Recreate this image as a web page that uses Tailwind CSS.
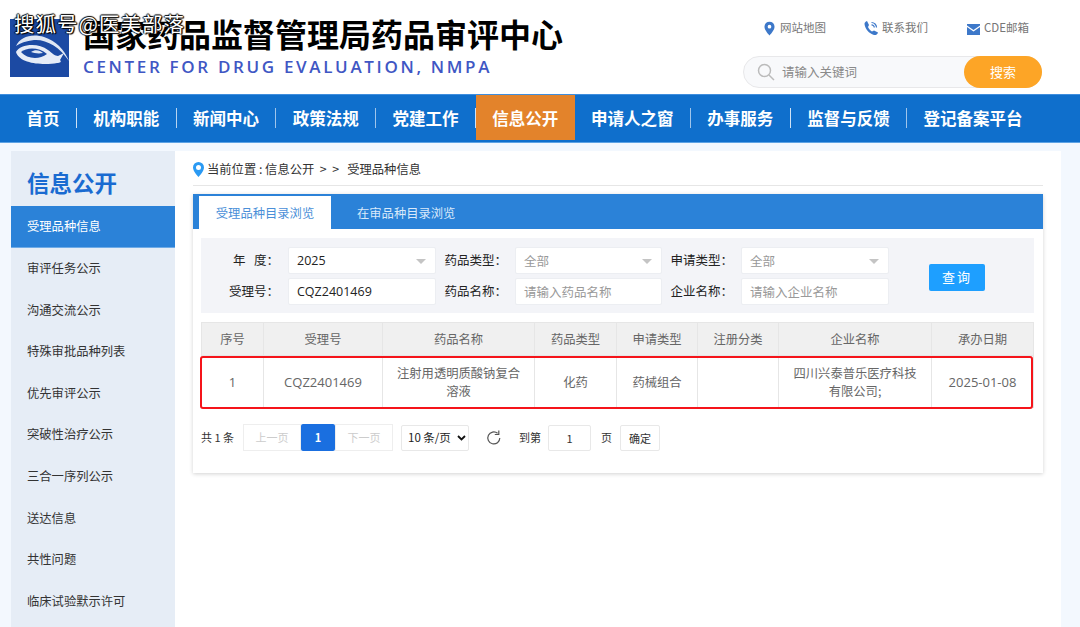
<!DOCTYPE html>
<html lang="zh"><head><meta charset="utf-8"><script src="https://cdn.jsdelivr.net/npm/@tailwindcss/browser@4"></script></head>
<body class="w-[1080px] h-[627px] overflow-hidden bg-[#f3f8fe] text-[12.5px] font-['Noto_Sans_CJK_SC','Noto_Sans',sans-serif] relative">
<div class="absolute left-[14px] top-[9px] text-[20.5px] leading-[28px] text-white tracking-[1px] whitespace-nowrap [text-shadow:1px_1px_1px_#000,-1px_0_1px_#000,0_-1px_1px_#000,1px_0_1px_#000] z-10">搜狐号@医美部落</div>
<header class="h-[94px] bg-white flex">
  <svg class="w-[59px] h-[58px] ml-[10px] mt-[19px] shrink-0" viewBox="0 0 59 58"><rect width="59" height="58" fill="#1c4aa3"/><path d="M6 27C10 18 22 14 34 18C46 22 54 30 59 42C50 28 36 20 24 21C16 22 10 24 6 27Z" fill="#dfe7f4"/><path d="M6 33C10 25 28 23 38 31C42 34 45 37 48 37L54 34L50 41C52 43 50 44 47 44C36 46 10 46 6 33Z" fill="#e6ecf7"/><path d="M11 33C17 28 29 28 37 35C29 41 17 40 11 33Z" fill="#1c4aa3"/><path d="M21 33C25 30 30 31 33 34C28 35 24 34 21 33Z" fill="#dfe7f4"/></svg>
  <div class="ml-[14px] pt-[13px] flex-1">
    <div class="text-[32px] leading-[40px] font-bold text-black whitespace-nowrap">国家药品监督管理局药品审评中心</div>
    <div class="text-[17px] leading-[20px] mt-[4px] font-semibold tracking-[2.66px] text-[#3f57c4] font-['Open_Sans',sans-serif] whitespace-nowrap">CENTER FOR DRUG EVALUATION, NMPA</div>
  </div>
  <div class="w-[299px] mr-[38px] shrink-0">
    <div class="flex h-[56px] items-center text-[11.5px] text-[#777]">
      <svg class="w-[11px] h-[15px] ml-[21px]" viewBox="0 0 12 15"><path d="M6 0a5.500 5.500 0 0 0-5.500 5.500C.5 9.500 6 15 6 15s5.500-5.500 5.500-9.500A5.500 5.500 0 0 0 6 0zm0 7.500a2 2 0 1 1 0-4 2 2 0 0 1 0 4z" fill="#3d78c9"/></svg>
      <span class="ml-[5px] w-[84px]">网站地图</span>
      <svg class="w-[14px] h-[14px]" viewBox="0 0 14 14"><path d="M3 0 L5 4 L4 6 C5 8 6.500 9.500 8 10.500 L10 9.500 L14 11.500 C13.500 13.500 11.500 14.500 10 14 C5 12.500 1 8 0.500 3 C0.500 1.500 1.500 .5 3 0Z" fill="#3d78c9"/><path d="M7.500 1.500a5 5 0 0 1 5 5M7.500 3.800a2.800 2.800 0 0 1 2.800 2.800" stroke="#3d78c9" stroke-width="1.200" fill="none"/></svg>
      <span class="ml-[4px] w-[85px]">联系我们</span>
      <svg class="w-[13px] h-[11px] mt-[2px]" viewBox="0 0 13 11"><path d="M0 0H13V1.500L6.500 6 0 1.500ZM0 3L6.500 7.500 13 3V11H0Z" fill="#3d78c9"/></svg>
      <span class="ml-[4px]">CDE邮箱</span>
    </div>
    <div class="w-[299px] h-[32px] flex items-center bg-[#f8f9fb] border border-[#e8e8ea] rounded-full relative">
      <svg class="w-[18px] h-[18px] ml-[13px]" viewBox="0 0 18 18"><circle cx="7.500" cy="7.500" r="6" fill="none" stroke="#bbb" stroke-width="1.500"/><path d="M12 12l5 5" stroke="#bbb" stroke-width="1.500"/></svg>
      <span class="ml-[7px] text-[#8a8a8a] text-[12.5px]">请输入关键词</span>
      <button class="absolute -right-px -top-[1px] w-[78px] h-[32px] rounded-full bg-[#fda526] text-white text-[13px]">搜索</button>
    </div>
  </div>
</header>
<nav class="h-[49px] bg-[#0f6fcc] border-t border-[#3f8ede] border-b border-b-[#5ea3e4] pl-[10px] flex items-start text-white text-[16.5px] font-bold box-border">
  <a class="mt-[13px] px-[16.4px] leading-[20px] border-r border-white/80">首页</a>
  <a class="mt-[13px] px-[16.4px] leading-[20px] border-r border-white/70">机构职能</a>
  <a class="mt-[13px] px-[16.4px] leading-[20px] border-r border-white/60">新闻中心</a>
  <a class="mt-[13px] px-[16.4px] leading-[20px] border-r border-white/60">政策法规</a>
  <a class="mt-[13px] px-[16.4px] leading-[20px] border-r border-white/80">党建工作</a>
  <a class="h-[45px] pt-[13px] px-[16.4px] leading-[20px] bg-[#e3832b]">信息公开</a>
  <a class="mt-[13px] px-[16.4px] leading-[20px] border-r border-white/60">申请人之窗</a>
  <a class="mt-[13px] px-[16.4px] leading-[20px] border-r border-white/80">办事服务</a>
  <a class="mt-[13px] px-[16.4px] leading-[20px] border-r border-white/60">监督与反馈</a>
  <a class="mt-[13px] px-[16.4px] leading-[20px]">登记备案平台</a>
</nav>
<div class="flex pl-[11px] pt-[8px] w-[1060px] h-[484px]">
  <aside class="w-[164px] bg-[#e6edf6] shrink-0">
    <h2 class="h-[55px] pl-[16px] pt-[14px] text-[22.5px] leading-[34px] font-bold text-[#1a6bd1]">信息公开</h2>
    <ul class="text-[#333] text-[12.3px]">
      <li class="h-[42px] pl-[16px] leading-[40px] bg-[#2b82d8] text-white border-b border-[#6fabe6]">受理品种信息</li>
      <li class="h-[41.6px] pl-[16px] leading-[40px]">审评任务公示</li>
      <li class="h-[41.6px] pl-[16px] leading-[40px]">沟通交流公示</li>
      <li class="h-[41.6px] pl-[16px] leading-[40px]">特殊审批品种列表</li>
      <li class="h-[41.6px] pl-[16px] leading-[40px]">优先审评公示</li>
      <li class="h-[41.6px] pl-[16px] leading-[40px]">突破性治疗公示</li>
      <li class="h-[41.6px] pl-[16px] leading-[40px]">三合一序列公示</li>
      <li class="h-[41.6px] pl-[16px] leading-[40px]">送达信息</li>
      <li class="h-[41.6px] pl-[16px] leading-[40px]">共性问题</li>
      <li class="h-[41.6px] pl-[16px] leading-[40px]">临床试验默示许可</li>
    </ul>
  </aside>
  <main class="flex-1 bg-white px-[18px]">
    <div class="h-[35px] border-b border-[#e6e6e6] flex items-center text-[#333] text-[12.3px] pt-[3px] whitespace-pre">
      <svg class="w-[11px] h-[15px] mr-[3px]" viewBox="0 0 11 15"><path d="M5.500 0A5.500 5.500 0 0 0 0 5.500C0 9.500 5.500 15 5.500 15S11 9.500 11 5.500A5.500 5.500 0 0 0 5.500 0zm0 8a2.500 2.500 0 1 1 0-5 2.500 2.500 0 0 1 0 5z" fill="#2b9af3"/></svg>
      <span>当前位置 : 信息公开  &gt;  &gt;   受理品种信息</span>
    </div>
    <section class="mt-[8px] w-[850px] h-[279px] bg-white shadow-[0_1px_4px_rgba(0,0,0,0.18)]">
      <div class="h-[35px] bg-[#2b82d8] pl-[6px] flex items-end text-[12.3px]">
        <div class="w-[132px] h-[33px] bg-white text-[#4a8fd8] text-center leading-[34px]">受理品种目录浏览</div>
        <div class="ml-[26px] h-[33px] text-[#d9e9fa] leading-[34px]">在审品种目录浏览</div>
      </div>
      <div class="pl-[8px] pr-[9px] pt-[9px]">
        <div class="h-[75px] bg-[#f3f4f8] pt-[9px] grid grid-cols-[87px_148px_79px_147px_79px_148px_1fr] auto-rows-[27px] gap-y-[4px] items-center text-[#222]">
          <label class="text-right pr-[9px] whitespace-pre">年   度：</label>
          <div class="h-[27px] bg-white border border-[#eceef2] rounded-[2px] pl-[8px] leading-[26px] font-['Open_Sans',sans-serif] relative">2025<span class="absolute right-[9px] top-[11px] border-x-[5px] border-x-transparent border-t-[5px] border-t-[#c4c4c4]"></span></div>
          <label class="text-right pr-[8px]">药品类型：</label>
          <div class="h-[27px] bg-white border border-[#eceef2] rounded-[2px] pl-[8px] leading-[25px] text-[#999] relative">全部<span class="absolute right-[9px] top-[11px] border-x-[5px] border-x-transparent border-t-[5px] border-t-[#c4c4c4]"></span></div>
          <label class="text-right pr-[8px]">申请类型：</label>
          <div class="h-[27px] bg-white border border-[#eceef2] rounded-[2px] pl-[8px] leading-[25px] text-[#999] relative">全部<span class="absolute right-[9px] top-[11px] border-x-[5px] border-x-transparent border-t-[5px] border-t-[#c4c4c4]"></span></div>
          <div class="row-span-2 pl-[40px] pt-[2px]"><button class="w-[56px] h-[27px] bg-[#1e9fff] text-white text-[13px] rounded-[2px] tracking-[2px]">查询</button></div>
          <label class="text-right pr-[9px]">受理号：</label>
          <div class="h-[27px] bg-white border border-[#eceef2] rounded-[2px] pl-[8px] leading-[25px] font-['Open_Sans',sans-serif]">CQZ2401469</div>
          <label class="text-right pr-[8px]">药品名称：</label>
          <div class="h-[27px] bg-white border border-[#eceef2] rounded-[2px] pl-[8px] leading-[25px] text-[#999]">请输入药品名称</div>
          <label class="text-right pr-[8px]">企业名称：</label>
          <div class="h-[27px] bg-white border border-[#eceef2] rounded-[2px] pl-[8px] leading-[25px] text-[#999]">请输入企业名称</div>
        </div>
        <div class="relative mt-[9px]">
          <table class="w-[832px] table-fixed border-collapse text-center text-[#666] text-[12.3px]">
            <colgroup><col class="w-[62px]"><col class="w-[119px]"><col class="w-[152px]"><col class="w-[82px]"><col class="w-[81px]"><col class="w-[81px]"><col class="w-[153px]"><col class="w-[102px]"></colgroup>
            <thead><tr class="h-[33px] bg-[#f0f0f0]">
              <th class="font-normal border border-[#e6e6e6]">序号</th><th class="font-normal border border-[#e6e6e6]">受理号</th><th class="font-normal border border-[#e6e6e6]">药品名称</th><th class="font-normal border border-[#e6e6e6]">药品类型</th><th class="font-normal border border-[#e6e6e6]">申请类型</th><th class="font-normal border border-[#e6e6e6]">注册分类</th><th class="font-normal border border-[#e6e6e6]">企业名称</th><th class="font-normal border border-[#e6e6e6]">承办日期</th>
            </tr></thead>
            <tbody><tr class="h-[52px] leading-[18px]">
              <td class="border border-[#e6e6e6] font-['Open_Sans',sans-serif] text-[13px]">1</td><td class="border border-[#e6e6e6] font-['Open_Sans',sans-serif] text-[13px]">CQZ2401469</td><td class="border border-[#e6e6e6] px-[14px]">注射用透明质酸钠复合溶液</td><td class="border border-[#e6e6e6]">化药</td><td class="border border-[#e6e6e6]">药械组合</td><td class="border border-[#e6e6e6]"></td><td class="border border-[#e6e6e6] px-[14px]">四川兴泰普乐医疗科技有限公司;</td><td class="border border-[#e6e6e6] font-['Open_Sans',sans-serif] text-[13px]">2025-01-08</td>
            </tr></tbody>
          </table>
          <div class="absolute left-[-1.5px] top-[33.5px] w-[833px] h-[53px] border-[2.5px] border-[#f5141a] rounded-[3px] pointer-events-none"></div>
        </div>
        <div class="flex items-center h-[27px] mt-[16px] text-[11px] text-[#333]">
          <span class="w-[42px]">共 1 条</span>
          <div class="flex h-[27px] leading-[25px] text-center">
            <span class="w-[58px] border border-[#eee] text-[#ccc]">上一页</span>
            <span class="w-[34px] bg-[#1a6fe0] text-white rounded-[2px] font-bold leading-[27px]">1</span>
            <span class="w-[58px] border border-[#eee] text-[#ccc]">下一页</span>
          </div>
          <span class="ml-[8px] w-[68px] h-[26px] border border-[#e8e8e8] rounded-[2px] flex items-center pl-[6px] text-[11.5px] text-[#222]">10 条/页<svg class="w-[9px] h-[6px] ml-[6px]" viewBox="0 0 9 6"><path d="M1 1l3.500 3.500L8 1" stroke="#111" stroke-width="1.800" fill="none"/></svg></span>
          <svg class="w-[16px] h-[16px] ml-[17px]" viewBox="0 0 16 16"><path d="M13.800 8a6 6 0 1 1-2.200-4.700" fill="none" stroke="#555" stroke-width="1.200"/><path d="M12.800 0.500v4h-4" fill="none" stroke="#555" stroke-width="1.200"/></svg>
          <span class="ml-[17px]">到第</span>
          <span class="ml-[7px] w-[43px] h-[26px] border border-[#e8e8e8] rounded-[2px] text-center leading-[24px]">1</span>
          <span class="ml-[10px]">页</span>
          <span class="ml-[8px] w-[40px] h-[26px] border border-[#e8e8e8] rounded-[2px] text-center leading-[24px]">确定</span>
        </div>
      </div>
    </section>
  </main>
</div>
</body></html>
